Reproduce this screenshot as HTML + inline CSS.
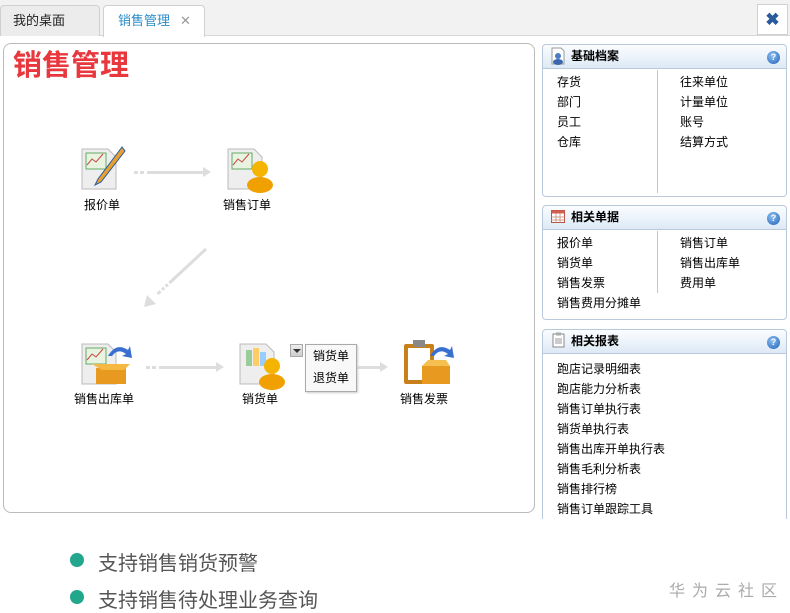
<!DOCTYPE html>
<html><head><meta charset="utf-8"><style>
*{margin:0;padding:0;box-sizing:border-box}
body{width:790px;height:613px;background:#fff;font-family:"Liberation Sans","Noto Sans CJK SC",sans-serif;font-size:12px;color:#000;position:relative;overflow:hidden}
.abs{position:absolute}
.tabbar{left:0;top:0;width:790px;height:36px;background:#f2f2f2;border-bottom:1px solid #d6d6d6}
.tab{top:5px;height:31px;border:1px solid #d0d0d0;border-bottom:none;border-radius:4px 4px 0 0;font-size:13px;line-height:30px}
.main{left:3px;top:43px;width:532px;height:470px;border:1px solid #bbb;border-radius:8px;background:#fff}
.panel{left:542px;width:245px;border:1px solid #b9c9dc;border-radius:4px;background:#fff}
.ph{height:24px;background:linear-gradient(#fbfdff,#dde9f6);border-bottom:1px solid #b9c9dc;font-weight:bold;font-size:12px;line-height:23px;padding-left:28px;position:relative;border-radius:4px 4px 0 0}
.q{position:absolute;right:6px;top:6px;width:13px;height:13px;border-radius:50%;background:radial-gradient(circle at 40% 35%,#8fc0f0,#1d5fb8);color:#fff;font-size:9px;line-height:13px;text-align:center;font-weight:bold}
.it{position:absolute;font-size:12px}
.lbl{position:absolute;font-size:12px;text-align:center;width:90px}
.arrow{position:absolute;height:3px;background:#ddd}
.bul{left:70px;width:14px;height:14px;border-radius:50%;background:#22a68c}
.bt{left:98px;font-size:20px;color:#555}
</style></head><body>
<div class="abs tabbar"></div>
<div class="abs tab" style="left:0;width:100px;background:#ececec;padding-left:12px;color:#222">我的桌面</div>
<div class="abs tab" style="left:103px;width:102px;background:#fff;height:32px;padding-left:14px;color:#2a8cc8">销售管理<span style="color:#999;margin-left:10px;font-size:13px">✕</span></div>
<div class="abs" style="left:757px;top:4px;width:31px;height:31px;background:#fff;border:1px solid #d0d0d0;color:#2a5c9c;font-weight:bold;font-size:17px;text-align:center;line-height:30px">✖</div>

<div class="abs main"></div>
<div class="abs" style="left:13px;top:42px;font-size:29px;font-weight:bold;color:#e8373d;letter-spacing:0">销售管理</div>

<!-- icons -->
<svg class="abs" style="left:78px;top:145px" width="48" height="48"><path d="M4 4h26l8 8v32H4z" fill="#eee" stroke="#bbb"/><rect x="8" y="8" width="20" height="16" fill="#e8f4e0" stroke="#6a6"/><path d="M9 20l5-6 4 3 7-8" stroke="#c44" fill="none"/><path d="M44 2L20 34l-3 6 6-3L47 6z" fill="#e7a030" stroke="#2a5aa0"/></svg>
<svg class="abs" style="left:224px;top:145px" width="50" height="48"><path d="M4 4h26l8 8v32H4z" fill="#eee" stroke="#bbb"/><rect x="8" y="8" width="20" height="16" fill="#e8f4e0" stroke="#6a6"/><path d="M9 20l5-6 4 3 7-8" stroke="#c44" fill="none"/><circle cx="36" cy="24" r="8" fill="#f5b400"/><ellipse cx="36" cy="40" rx="13" ry="8" fill="#f0a000"/></svg>
<svg class="abs" style="left:78px;top:340px" width="56" height="48"><path d="M4 4h26l8 8v32H4z" fill="#eee" stroke="#bbb"/><rect x="8" y="8" width="20" height="16" fill="#e8f4e0" stroke="#6a6"/><path d="M9 20l5-6 4 3 7-8" stroke="#c44" fill="none"/><path d="M18 28h30v16H18z" fill="#e89a20"/><path d="M14 24l10 6h22l6-6" fill="#f5b840"/><path d="M30 16q8-14 20-6l2-4 2 12-10-2 4-2q-8-6-14 2z" fill="#3a6fd0"/></svg>
<svg class="abs" style="left:236px;top:340px" width="50" height="50"><path d="M4 4h26l8 8v32H4z" fill="#eee" stroke="#bbb"/><rect x="10" y="10" width="6" height="16" fill="#9c9"/><rect x="17" y="8" width="6" height="18" fill="#fc6"/><rect x="24" y="12" width="6" height="14" fill="#9cf"/><circle cx="36" cy="26" r="8" fill="#f5b400"/><ellipse cx="36" cy="42" rx="13" ry="8" fill="#f0a000"/></svg>
<svg class="abs" style="left:400px;top:338px" width="56" height="50"><rect x="4" y="6" width="30" height="40" rx="2" fill="#c8801a"/><rect x="8" y="10" width="22" height="32" fill="#fff"/><rect x="13" y="2" width="12" height="7" fill="#888"/><path d="M22 28h28v18H22z" fill="#e89a20"/><path d="M22 28l6-6h18l4 6z" fill="#f5c050"/><path d="M30 18q8-14 20-6l2-4 2 12-10-2 4-2q-8-6-14 2z" fill="#3a6fd0"/></svg>

<div class="arrow" style="left:134px;top:171px;width:72px;background:linear-gradient(90deg,#ddd 0,#ddd 4px,#fff 4px,#fff 6px,#ddd 6px,#ddd 10px,#fff 10px,#fff 13px,#ddd 13px)"></div>
<div class="abs" style="left:203px;top:167px;border-left:8px solid #ddd;border-top:5px solid transparent;border-bottom:5px solid transparent"></div>
<svg class="abs" style="left:140px;top:245px" width="70" height="65"><path d="M66 4L10 56" stroke="#ddd" stroke-width="3" stroke-dasharray="50 2 3 2 3 2 4 40"/><path d="M4 62l3-12 9 9z" fill="#ddd"/></svg>
<div class="arrow" style="left:146px;top:366px;width:72px;background:linear-gradient(90deg,#ddd 0,#ddd 4px,#fff 4px,#fff 6px,#ddd 6px,#ddd 10px,#fff 10px,#fff 13px,#ddd 13px)"></div>
<div class="abs" style="left:216px;top:362px;border-left:8px solid #ddd;border-top:5px solid transparent;border-bottom:5px solid transparent"></div>
<div class="arrow" style="left:356px;top:366px;width:24px"></div>
<div class="abs" style="left:380px;top:362px;border-left:8px solid #ddd;border-top:5px solid transparent;border-bottom:5px solid transparent"></div>

<div class="abs" style="left:290px;top:344px;width:13px;height:13px;background:linear-gradient(#eee,#ccc);border:1px solid #aaa"><div style="margin:4px auto 0;width:0;border-left:4px solid transparent;border-right:4px solid transparent;border-top:4px solid #333"></div></div>
<div class="abs" style="left:305px;top:344px;width:52px;height:48px;border:1px solid #aaa;background:#f8f8f8;box-shadow:1px 1px 2px #ccc;font-size:12px;line-height:22px;padding-left:7px">销货单<br>退货单</div>

<div class="lbl" style="left:57px;top:196px">报价单</div>
<div class="lbl" style="left:202px;top:196px">销售订单</div>
<div class="lbl" style="left:59px;top:390px">销售出库单</div>
<div class="lbl" style="left:215px;top:390px">销货单</div>
<div class="lbl" style="left:379px;top:390px">销售发票</div>

<!-- panels -->
<div class="abs panel" style="top:44px;height:153px"><div class="ph">基础档案<span class="q">?</span></div>
<div class="abs" style="left:114px;top:25px;width:1px;height:123px;background:#b9c9dc"></div></div>
<svg class="abs" style="left:550px;top:47px" width="16" height="18"><path d="M2 1h9l3 3v13H2z" fill="#fff" stroke="#999"/><circle cx="8" cy="9" r="3" fill="#4a7cc0"/><ellipse cx="8" cy="15" rx="5" ry="3" fill="#3a66b0"/></svg>
<div class="it" style="left:557px;top:73px">存货</div><div class="it" style="left:680px;top:73px">往来单位</div>
<div class="it" style="left:557px;top:93px">部门</div><div class="it" style="left:680px;top:93px">计量单位</div>
<div class="it" style="left:557px;top:113px">员工</div><div class="it" style="left:680px;top:113px">账号</div>
<div class="it" style="left:557px;top:133px">仓库</div><div class="it" style="left:680px;top:133px">结算方式</div>

<div class="abs panel" style="top:205px;height:115px"><div class="ph">相关单据<span class="q">?</span></div>
<div class="abs" style="left:114px;top:25px;width:1px;height:62px;background:#b9c9dc"></div></div>
<svg class="abs" style="left:551px;top:210px" width="14" height="13"><rect x="0.5" y="0.5" width="13" height="12" fill="#fff" stroke="#c05040"/><rect x="0.5" y="0.5" width="13" height="3" fill="#d06050"/><path d="M0 7h14M0 10h14M5 3v10M9 3v10" stroke="#c08070" stroke-width="0.7"/></svg>
<div class="it" style="left:557px;top:234px">报价单</div><div class="it" style="left:680px;top:234px">销售订单</div>
<div class="it" style="left:557px;top:254px">销货单</div><div class="it" style="left:680px;top:254px">销售出库单</div>
<div class="it" style="left:557px;top:274px">销售发票</div><div class="it" style="left:680px;top:274px">费用单</div>
<div class="it" style="left:557px;top:294px">销售费用分摊单</div>

<div class="abs panel" style="top:329px;height:200px;border-bottom:none"><div class="ph">相关报表<span class="q">?</span></div></div>
<div class="abs" style="left:540px;top:519px;width:250px;height:20px;background:#fff"></div>
<svg class="abs" style="left:552px;top:332px" width="13" height="16"><rect x="1" y="2" width="11" height="13" fill="#fff" stroke="#888"/><rect x="4" y="0.5" width="5" height="3" fill="#aaa"/><path d="M3 7h7M3 9h7M3 11h7" stroke="#999"/></svg>
<div class="it" style="left:557px;top:360px">跑店记录明细表</div>
<div class="it" style="left:557px;top:380px">跑店能力分析表</div>
<div class="it" style="left:557px;top:400px">销售订单执行表</div>
<div class="it" style="left:557px;top:420px">销货单执行表</div>
<div class="it" style="left:557px;top:440px">销售出库开单执行表</div>
<div class="it" style="left:557px;top:460px">销售毛利分析表</div>
<div class="it" style="left:557px;top:480px">销售排行榜</div>
<div class="it" style="left:557px;top:500px">销售订单跟踪工具</div>

<div class="abs bul" style="top:553px"></div><div class="abs bt" style="top:547px">支持销售销货预警</div>
<div class="abs bul" style="top:590px"></div><div class="abs bt" style="top:584px">支持销售待处理业务查询</div>
<div class="abs" style="left:669px;top:577px;font-size:16px;color:#aaa;letter-spacing:7px">华为云社区</div>
</body></html>
